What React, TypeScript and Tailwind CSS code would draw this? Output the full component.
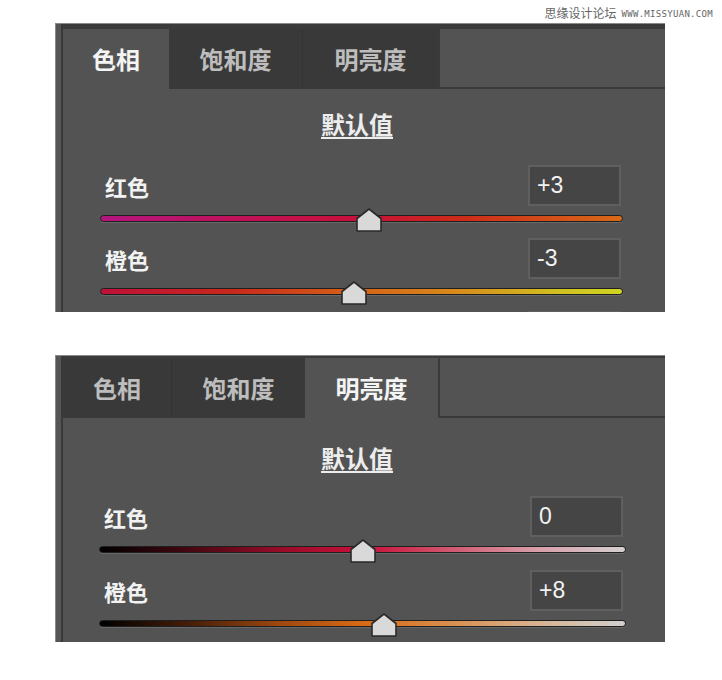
import React from "react";

type Row = { label: string; value: string; v: number; grad: string };

type PanelCfg = {
  outer: string;
  topDark: string;
  tabWidths: string[];
  active: number;
  contentPt: string;
  rowsMt: string;
  rowsPx: string;
  rowGap: string;
  inputMr: string;
  rows: Row[];
  peekBox: boolean;
};

const cjk = "font-['Noto_Sans_CJK_SC','Noto_Sans',sans-serif]";

const tabs = ["色相", "饱和度", "明亮度"];

const panels: PanelCfg[] = [
  {
    outer: "h-[289px]",
    topDark: "border-t-[5px]",
    tabWidths: ["w-[106px]", "w-[134px]", "w-[135px]"],
    active: 0,
    contentPt: "pt-[20px]",
    rowsMt: "mt-[26px]",
    rowsPx: "pl-[37px] pr-[42px]",
    rowGap: "gap-[16px]",
    inputMr: "mr-[2px]",
    peekBox: true,
    rows: [
      {
        label: "红色",
        value: "+3",
        v: 3,
        grad: "bg-[linear-gradient(to_right,#b3157f_0%,#c0125a_25%,#c8103a_50%,#cc2a1a_68%,#d86a18_100%)]",
      },
      {
        label: "橙色",
        value: "-3",
        v: -3,
        grad: "bg-[linear-gradient(to_right,#c0103a_0%,#c8281c_25%,#d46018_48%,#d88a1c_68%,#d0c020_88%,#cfd422_100%)]",
      },
    ],
  },
  {
    outer: "mt-[43px] h-[287px]",
    topDark: "border-t-[2px]",
    tabWidths: ["w-[109px]", "w-[133px]", "w-[133px]"],
    active: 2,
    contentPt: "pt-[25px]",
    rowsMt: "mt-[23px]",
    rowsPx: "pl-[36px] pr-[39px]",
    rowGap: "gap-[17px]",
    inputMr: "mr-[3px]",
    peekBox: false,
    rows: [
      {
        label: "红色",
        value: "0",
        v: 0,
        grad: "bg-[linear-gradient(to_right,#000000_0%,#4a0812_18%,#9a0c2a_35%,#c8103a_50%,#d0506a_65%,#d89aa6_82%,#d4d0d0_100%)]",
      },
      {
        label: "橙色",
        value: "+8",
        v: 8,
        grad: "bg-[linear-gradient(to_right,#000000_0%,#4a2008_18%,#a04a10_35%,#d86a14_50%,#d88a48_65%,#d8b08c_82%,#d0d0d0_100%)]",
      },
    ],
  },
];

function Thumb({ v }: { v: number }) {
  const pct = (v + 100) / 2;
  return (
    <svg
      width="26"
      height="24"
      viewBox="0 0 26 24"
      className="absolute top-[-7px]"
      style={{ left: `calc(${pct}% - 13px)` }}
    >
      <polygon
        points="13,1 25,10.5 25,23 1,23 1,10.5"
        fill="#d9d9d9"
        stroke="#2a2a2a"
        strokeWidth="1.6"
        strokeLinejoin="round"
      />
    </svg>
  );
}

function Panel({ cfg }: { cfg: PanelCfg }) {
  return (
    <div
      className={`ml-[55px] w-[610px] ${cfg.outer} overflow-hidden bg-[#535353] border-t border-[#8a8a8a] flex`}
    >
      <div className="w-[8px] shrink-0 bg-[#555555] border-l border-l-[#8a8a8a] border-r-2 border-r-[#393939]" />
      <div className={`flex-1 flex flex-col ${cfg.topDark} border-[#3b3b3b]`}>
        <div className="flex h-[60px] shrink-0">
          {tabs.map((t, i) => {
            const isActive = i === cfg.active;
            const nextInactive = i < 2 && i + 1 !== cfg.active && !isActive;
            return (
              <div
                key={t}
                className={`${cfg.tabWidths[i]} shrink-0 flex items-center justify-center ${cjk} text-[24px] font-bold ${
                  isActive ? "bg-[#535353] text-[#f4f4f4]" : "bg-[#393939] text-[#bdbdbd]"
                } ${nextInactive ? "border-r border-[#333333]" : ""}`}
              >
                {t}
              </div>
            );
          })}
          <div className="flex-1 border-l-2 border-b-2 border-[#3a3a3a] bg-[#535353]" />
        </div>
        <div className={cfg.contentPt}>
          <div
            className={`h-[30px] leading-[30px] text-center pr-[14px] ${cjk} text-[24px] font-bold text-[#ededed] underline underline-offset-[3px] decoration-[2px]`}
          >
            默认值
          </div>
          <div className={`${cfg.rowsMt} ${cfg.rowsPx} flex flex-col ${cfg.rowGap}`}>
            {cfg.rows.map((r) => (
              <div key={r.label} className="flex flex-col gap-[9px]">
                <div className="flex items-center justify-between h-[41px]">
                  <span className={`pl-[5px] ${cjk} text-[22px] font-bold text-[#f2f2f2] leading-none`}>
                    {r.label}
                  </span>
                  <div
                    className={`w-[93px] h-[41px] ${cfg.inputMr} bg-[#454545] border-2 border-[#5f5f5f] flex items-center pl-[7px] font-['Liberation_Sans',Arial,sans-serif] text-[23px] text-[#f2f2f2]`}
                  >
                    {r.value}
                  </div>
                </div>
                <div className="relative h-[7px]">
                  <div
                    className={`h-[7px] rounded-full border border-[#1f1f1f] shadow-[0_1px_0_#686868] ${r.grad}`}
                  />
                  <Thumb v={r.v} />
                </div>
              </div>
            ))}
            {cfg.peekBox && (
              <div className="flex justify-end">
                <div className={`w-[93px] h-[41px] ${cfg.inputMr} bg-[#454545] border-2 border-[#5f5f5f]`} />
              </div>
            )}
          </div>
        </div>
      </div>
    </div>
  );
}

export default function App() {
  return (
    <div className="w-[722px] h-[680px] bg-white overflow-hidden">
      <div className="h-[23px] flex items-end justify-end pr-[9px] pb-[4px] gap-[5px] text-[#666666]">
        <span className={`${cjk} text-[12px] leading-none`}>思缘设计论坛</span>
        <span className="font-['DejaVu_Sans_Mono',monospace] text-[9px] leading-none tracking-[0.3px]">
          WWW.MISSYUAN.COM
        </span>
      </div>
      {panels.map((p, i) => (
        <Panel key={i} cfg={p} />
      ))}
    </div>
  );
}
